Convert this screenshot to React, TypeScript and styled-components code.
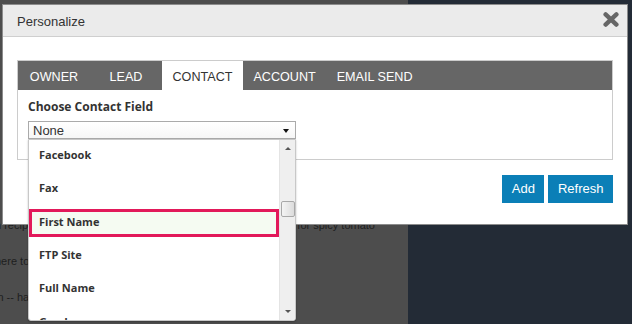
import React from "react";
import styled, { createGlobalStyle } from "styled-components";

const GlobalStyle = createGlobalStyle`
  html, body { margin: 0; padding: 0; width: 632px; height: 324px; overflow: hidden; }
  body { font-family: "Liberation Sans", Arial, sans-serif; }
  * { box-sizing: border-box; }
`;

const Page = styled.div`
  position: relative;
  width: 632px;
  height: 324px;
  display: grid;
  grid-template-columns: 408px 1fr;
  overflow: hidden;
`;

const Backdrop = styled.div`
  background: #4d4d4d;
  padding-top: 207px;
  overflow: hidden;
`;

const Side = styled.div`
  background: #232b36;
`;

const BgLine = styled.div<{ $split?: boolean }>`
  height: 36px;
  line-height: 36px;
  font-size: 11px;
  color: #1e1e1e;
  margin-left: -5px;
  white-space: nowrap;
  display: flex;
  width: 380px;
  justify-content: ${(p) => (p.$split ? "space-between" : "flex-start")};
`;

const Dialog = styled.div`
  position: absolute;
  left: 2px;
  top: 4px;
  width: 626px;
  height: 221px;
  border: 1px solid #8c8c8c;
  background: #fff;
  display: flex;
  flex-direction: column;
`;

const Header = styled.div`
  height: 32px;
  background: #ebebeb;
  border-bottom: 1px solid #cfcfcf;
  display: flex;
  align-items: center;
  justify-content: space-between;
  padding: 2px 8px 0 14px;
`;

const Title = styled.div`
  font-size: 13px;
  color: #333;
`;

const CloseButton = styled.div`
  width: 16px;
  height: 15px;
  margin-top: -4px;
  display: flex;
`;

const Body = styled.div`
  padding: 23px 14px 21px 14px;
  display: flex;
  flex-direction: column;
`;

const Panel = styled.div`
  border: 1px solid #cccccc;
  height: 100px;
  display: flex;
  flex-direction: column;
`;

const TabBar = styled.div`
  height: 29px;
  background: #666666;
  display: flex;
`;

const Tab = styled.div<{ $active?: boolean }>`
  min-width: 72px;
  padding: 3px 10.5px 0;
  text-align: center;
  font-size: 12.6px;
  line-height: 26px;
  color: ${(p) => (p.$active ? "#333" : "#fff")};
  background: ${(p) => (p.$active ? "#fff" : "transparent")};
`;

const Content = styled.div`
  padding: 9px 10px 0;
`;

const Label = styled.div`
  font-family: "Open Sans", sans-serif;
  font-weight: 700;
  font-size: 12px;
  line-height: 16px;
  color: #333;
  margin-bottom: 6px;
`;

const SelectWrap = styled.div`
  position: relative;
  width: 268px;
`;

const SelectBox = styled.div`
  height: 18px;
  border: 1px solid #aaaaaa;
  background: linear-gradient(#ffffff, #f6f6f6);
  display: flex;
  align-items: center;
  justify-content: space-between;
  padding: 0 6px 0 4px;
  font-size: 13px;
  color: #333;
`;

const Caret = styled.span`
  width: 0;
  height: 0;
  border-left: 3.5px solid transparent;
  border-right: 3.5px solid transparent;
  border-top: 4px solid #111;
  margin-top: 1px;
`;

const Dropdown = styled.div`
  position: absolute;
  top: 18px;
  left: 0;
  width: 268px;
  height: 182px;
  background: #fff;
  border: 1px solid #c8c8c8;
  border-radius: 0 0 3px 3px;
  box-shadow: 0 1px 2px rgba(0, 0, 0, 0.25);
  display: flex;
  overflow: hidden;
  z-index: 2;
`;

const Items = styled.div`
  flex: 1;
  display: flex;
  flex-direction: column;
  gap: 5.33px;
  padding-top: 2px;
  overflow: hidden;
`;

const Item = styled.div<{ $selected?: boolean }>`
  flex: none;
  height: 28px;
  border: 3px solid ${(p) => (p.$selected ? "#e2195a" : "transparent")};
  background: ${(p) => (p.$selected ? "#f5fbf2" : "transparent")};
  padding: 0 0 3px 7px;
  font-family: "Open Sans", sans-serif;
  font-weight: 700;
  font-size: 11px;
  line-height: 19px;
  color: #333;
`;

const Scrollbar = styled.div`
  width: 16px;
  background: #efefef;
  border-left: 1px solid #e4e4e4;
  display: flex;
  flex-direction: column;
  align-items: center;
`;

const Arrow = styled.div<{ $down?: boolean }>`
  height: 17px;
  display: flex;
  align-items: center;
  justify-content: center;
  &::after {
    content: "";
    width: 0;
    height: 0;
    border-left: 3px solid transparent;
    border-right: 3px solid transparent;
    ${(p) => (p.$down ? "border-top: 3px solid #555;" : "border-bottom: 3px solid #555;")}
  }
`;

const Thumb = styled.div`
  margin-top: 44px;
  width: 14px;
  height: 16px;
  border: 1px solid #a8a8a8;
  border-radius: 2px;
  background: linear-gradient(90deg, #f4f4f4, #dcdcdc);
`;

const Spacer = styled.div`
  flex: 1;
`;

const ButtonRow = styled.div`
  display: flex;
  justify-content: flex-end;
  gap: 4px;
  margin-top: 15px;
`;

const Button = styled.button`
  height: 28px;
  padding: 0 9.5px;
  border: none;
  background: #0b7fb7;
  color: #fff;
  font-family: "Liberation Sans", Arial, sans-serif;
  font-size: 13px;
  line-height: 28px;
`;

const tabs = ["OWNER", "LEAD", "CONTACT", "ACCOUNT", "EMAIL SEND"];
const fields = ["Facebook", "Fax", "First Name", "FTP Site", "Full Name", "Gender"];

export default function App() {
  return (
    <>
      <GlobalStyle />
      <Page>
        <Backdrop>
          <BgLine $split>
            <span>n recipe</span>
            <span>s for spicy tomato</span>
          </BgLine>
          <BgLine>here to</BgLine>
          <BgLine>in -- has</BgLine>
        </Backdrop>
        <Side />
        <Dialog>
          <Header>
            <Title>Personalize</Title>
            <CloseButton>
              <svg width="16" height="15" viewBox="0 0 16 15">
                <path
                  d="M2.6 2.4 L13.4 12.6 M13.4 2.4 L2.6 12.6"
                  stroke="#666"
                  strokeWidth="4.4"
                  strokeLinecap="round"
                />
              </svg>
            </CloseButton>
          </Header>
          <Body>
            <Panel>
              <TabBar>
                {tabs.map((t) => (
                  <Tab key={t} $active={t === "CONTACT"}>
                    {t}
                  </Tab>
                ))}
              </TabBar>
              <Content>
                <Label>Choose Contact Field</Label>
                <SelectWrap>
                  <SelectBox>
                    <span>None</span>
                    <Caret />
                  </SelectBox>
                  <Dropdown>
                    <Items>
                      {fields.map((f) => (
                        <Item key={f} $selected={f === "First Name"}>
                          {f}
                        </Item>
                      ))}
                    </Items>
                    <Scrollbar>
                      <Arrow />
                      <Thumb />
                      <Spacer />
                      <Arrow $down />
                    </Scrollbar>
                  </Dropdown>
                </SelectWrap>
              </Content>
            </Panel>
            <ButtonRow>
              <Button>Add</Button>
              <Button>Refresh</Button>
            </ButtonRow>
          </Body>
        </Dialog>
      </Page>
    </>
  );
}
